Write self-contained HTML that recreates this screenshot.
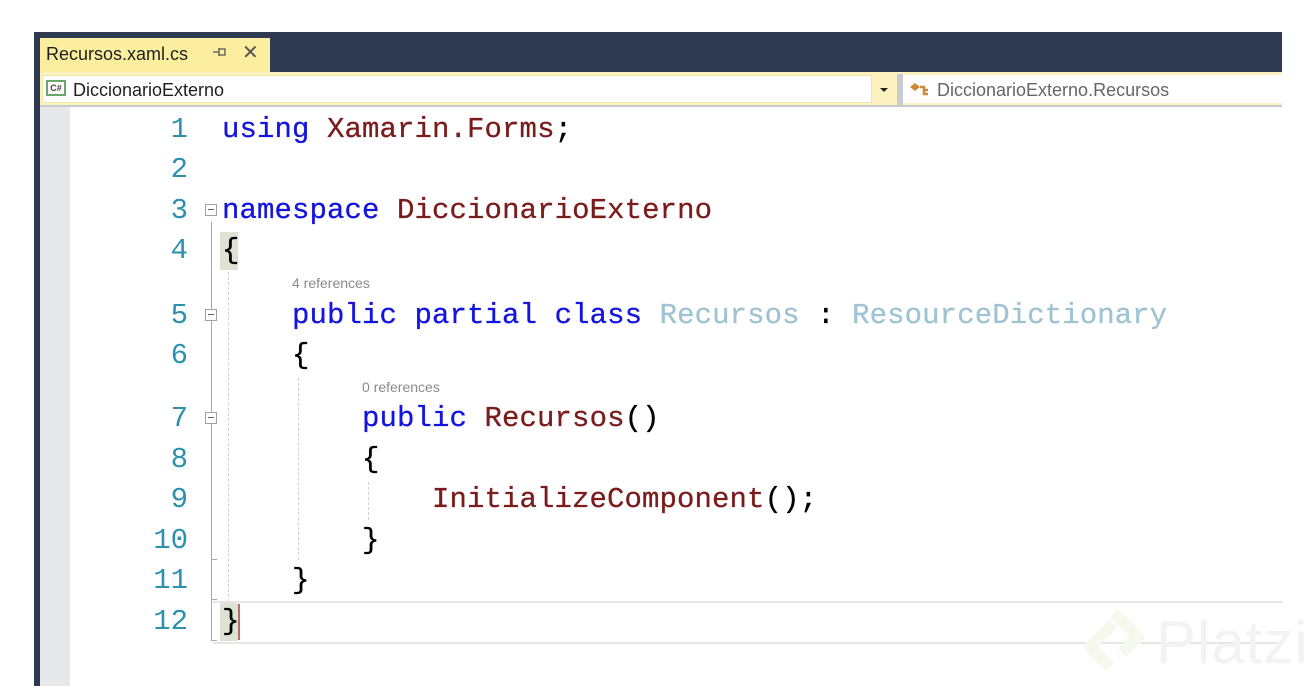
<!DOCTYPE html>
<html><head><meta charset="utf-8"><style>
body{margin:0;width:1316px;height:686px;background:#fff;position:relative;overflow:hidden;font-family:"Liberation Sans",sans-serif}
.a{position:absolute}
.ln{position:absolute;left:100px;width:88px;text-align:right;font:29px/40px "Liberation Mono",monospace;color:#2b91af}
.c{position:absolute;font:29px/40px "Liberation Mono",monospace;color:#000;white-space:pre;letter-spacing:0.1px;-webkit-text-stroke:0.3px currentColor}
.k{color:#1414e0}.t{color:#7b1c1c}.g{color:#9fc3d3}
.cl{position:absolute;font:14px/16px "Liberation Sans",sans-serif;color:#8a8a8a}
.box{position:absolute;width:10px;height:10px;border:1px solid #a0a0a0;background:#fff}
.box:after{content:"";position:absolute;left:2px;top:4px;width:6px;height:1px;background:#606060}
.dash{position:absolute;width:0;border-left:1px dashed #d0d0d0}
</style></head><body>
<div class="a" style="left:34px;top:32px;width:1248px;height:40px;background:#2d3a52"></div>
<div class="a" style="left:34px;top:32px;width:6px;height:654px;background:#2d3a52"></div>
<div class="a" style="left:40px;top:38px;width:230px;height:34px;background:#fbef9f"></div>
<div class="a" style="left:46px;top:44px;font-size:18px;color:#1e1e1e">Recursos.xaml.cs</div>
<svg class="a" style="left:212px;top:46px" width="16" height="12"><path d="M1 6h6M7 2v8M7 3h6v6h-6M10 6h0" stroke="#555" stroke-width="1.3" fill="none"/></svg>
<div class="a" style="left:242px;top:40px;font-size:20px;color:#555">✕</div>
<div class="a" style="left:40px;top:72px;width:1242px;height:35px;background:#fbf2c0;border-bottom:2px solid #c8cbd2;box-sizing:border-box"></div>
<div class="a" style="left:42px;top:75px;width:830px;height:28px;background:#fff;border:1px solid #f1e5a8;box-sizing:border-box"></div>
<div class="a" style="left:46px;top:80px;width:20px;height:16px;border:2px solid #6aa56a;box-sizing:border-box;font:bold 9px/12px 'Liberation Sans';color:#444;text-align:center">C#</div>
<div class="a" style="left:73px;top:80px;font-size:18px;color:#1e1e1e">DiccionarioExterno</div>
<div class="a" style="left:880px;top:88px;width:0;height:0;border-left:4px solid transparent;border-right:4px solid transparent;border-top:4px solid #222"></div>
<div class="a" style="left:897px;top:74px;width:6px;height:31px;background:#c8cbd2"></div>
<div class="a" style="left:903px;top:75px;width:379px;height:28px;background:#fff"></div>
<div class="a" style="left:908px;top:81px;width:22px;height:16px">
<svg width="22" height="16"><path d="M2 6 L7 2 L12 6 L7 10Z" fill="#c98a3a"/><path d="M12 6h4v7h4M16 9h4" stroke="#c98a3a" stroke-width="2.5" fill="none"/></svg></div>
<div class="a" style="left:937px;top:80px;font-size:18px;color:#666">DiccionarioExterno.Recursos</div>
<div class="a" style="left:40px;top:107px;width:30px;height:579px;background:#e7e8ea"></div>

<div class="a" style="left:211px;top:222px;width:1px;height:418px;background:#a8a8a8"></div>
<div class="box" style="left:205px;top:204px"></div>
<div class="box" style="left:205px;top:309px"></div>
<div class="box" style="left:205px;top:412px"></div>
<div class="a" style="left:211px;top:559px;width:6px;height:1px;background:#a8a8a8"></div>
<div class="a" style="left:211px;top:599px;width:6px;height:1px;background:#a8a8a8"></div>
<div class="a" style="left:211px;top:640px;width:6px;height:1px;background:#a8a8a8"></div>
<div class="dash" style="left:228px;top:272px;height:330px"></div>
<div class="dash" style="left:298px;top:378px;height:182px"></div>
<div class="dash" style="left:368px;top:482px;height:38px"></div>
<div class="a" style="left:213px;top:601px;width:1069px;height:39px;border-top:2px solid #e6e6e6;border-bottom:2px solid #e6e6e6"></div>
<div class="a" style="left:220px;top:232px;width:18px;height:38px;background:#dde2d2"></div>
<div class="a" style="left:220px;top:603px;width:18px;height:38px;background:#dde2d2"></div>
<div class="a" style="left:238px;top:604px;width:2px;height:36px;background:#b07070"></div>

<div class="ln" style="top:110px">1</div><div class="c" style="left:222px;top:110px"><span class="k">using</span> <span class="t">Xamarin.Forms</span>;</div>
<div class="ln" style="top:150px">2</div>
<div class="ln" style="top:191px">3</div><div class="c" style="left:222px;top:191px"><span class="k">namespace</span> <span class="t">DiccionarioExterno</span></div>
<div class="ln" style="top:231px">4</div><div class="c" style="left:222px;top:231px">{</div>
<div class="cl" style="left:292px;top:275px">4 references</div>
<div class="ln" style="top:296px">5</div><div class="c" style="left:292px;top:296px"><span class="k">public</span> <span class="k">partial</span> <span class="k">class</span> <span class="g">Recursos</span> : <span class="g">ResourceDictionary</span></div>
<div class="ln" style="top:336px">6</div><div class="c" style="left:292px;top:336px">{</div>
<div class="cl" style="left:362px;top:379px">0 references</div>
<div class="ln" style="top:399px">7</div><div class="c" style="left:362px;top:399px"><span class="k">public</span> <span class="t">Recursos</span>()</div>
<div class="ln" style="top:440px">8</div><div class="c" style="left:362px;top:440px">{</div>
<div class="ln" style="top:480px">9</div><div class="c" style="left:432px;top:480px"><span class="t">InitializeComponent</span>();</div>
<div class="ln" style="top:521px">10</div><div class="c" style="left:362px;top:521px">}</div>
<div class="ln" style="top:561px">11</div><div class="c" style="left:292px;top:561px">}</div>
<div class="ln" style="top:602px">12</div><div class="c" style="left:222px;top:602px">}</div>

<svg class="a" style="left:1082px;top:605px" width="70" height="76"><path d="M32 8 L56 32 L40 48 M28 62 L8 42 L32 18" stroke="#f6f9ee" stroke-width="12" fill="none" stroke-linejoin="round"/></svg>
<div class="a" style="left:1156px;top:608px;font-size:60px;color:#f3f3f3;letter-spacing:1px">Platzi</div>
</body></html>
